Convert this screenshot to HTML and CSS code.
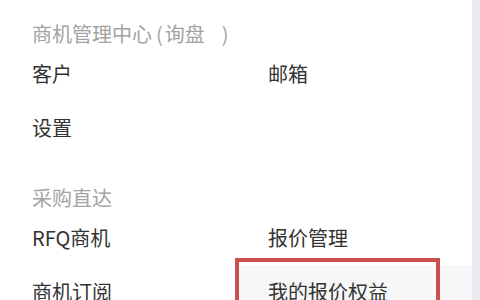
FILE: index.html
```html
<!DOCTYPE html>
<html lang="zh-CN">
<head>
<meta charset="utf-8">
<link rel="stylesheet" href="styles.css">
</head>
<body>
<div class="page">
  <div class="panel">
    <div class="title first">商机管理中心<span class="paren-l">(</span>询盘<span class="paren-r">)</span></div>
    <div class="grid">
      <div class="cell">客户</div>
      <div class="cell">邮箱</div>
      <div class="cell">设置</div>
      <div class="cell"></div>
    </div>
    <div class="title second">采购直达</div>
    <div class="grid">
      <div class="cell">RFQ商机</div>
      <div class="cell">报价管理</div>
      <div class="cell">商机订阅</div>
      <div class="cell hover">我的报价权益<span class="mark"></span></div>
    </div>
  </div>
  <div class="strip"></div>
</div>
</body>
</html>
```
FILE: styles.css
```css
html, body {
  margin: 0;
  padding: 0;
  background: #ffffff;
}
.page {
  display: flex;
  width: 480px;
  height: 300px;
  overflow: hidden;
  font-family: "Noto Sans CJK SC", "Noto Sans", sans-serif;
}
.panel {
  flex: 1;
  background: #ffffff;
}
.strip {
  width: 8px;
  background: #e9ebf0;
}
.title {
  padding-left: 32px;
  height: 26px;
  line-height: 26px;
  font-size: 20px;
  color: #a3a3a3;
  white-space: nowrap;
}
.paren-l {
  margin: 0 2px 0 4px;
}
.paren-r {
  margin-left: 17px;
}
.title.first {
  margin-top: 21px;
}
.title.second {
  margin-top: 30px;
}
.grid {
  display: grid;
  grid-template-columns: 236px 1fr;
  grid-auto-rows: 54px;
}
.cell {
  position: relative;
  padding-left: 32px;
  line-height: 54px;
  font-size: 20px;
  color: #333333;
}
.cell.hover {
  background: #f7f7f8;
}
.mark {
  position: absolute;
  left: -1px;
  top: -7px;
  width: 205px;
  height: 70px;
  box-sizing: border-box;
  border: 4px solid #c9504f;
}
```
